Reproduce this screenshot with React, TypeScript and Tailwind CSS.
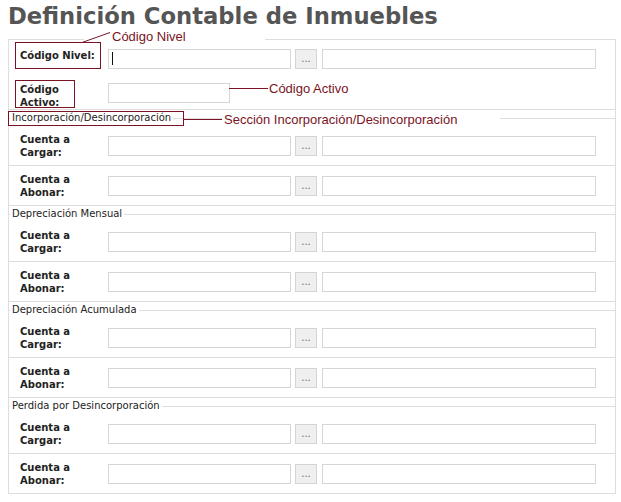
import React from 'react';

const MAROON = '#7a1424';

function Lookup({ caret = false }: { caret?: boolean }) {
  return (
    <div className="flex items-center">
      <div className="relative">
        <input type="text" className="block h-[20px] w-[183px] border border-[#d6d6d6] bg-white outline-none" />
        {caret && <span className="absolute left-[4px] top-[3px] h-[13px] w-[1px] bg-[#111]" />}
      </div>
      <button className="ml-[4px] h-[20px] w-[22px] border border-[#d4d4d4] bg-[#efefef] text-[10px] leading-none text-[#666]">...</button>
      <input type="text" className="ml-[5px] block h-[20px] w-[274px] border border-[#d6d6d6] bg-white outline-none" />
    </div>
  );
}

function AccountRow({ label }: { label: string }) {
  return (
    <div className="flex h-[40px] items-center border-b border-[#dedede]">
      <div className="w-[99px] pl-[11px] text-[10px] font-bold leading-[13px] text-[#222]">
        Cuenta a<br />
        {label}
      </div>
      <Lookup />
    </div>
  );
}

function Section({ title }: { title: string }) {
  return (
    <fieldset className="m-0 min-w-0 border-t border-[#dedede] p-0">
      <legend className="ml-[1px] px-[2px] text-[10px] leading-[16px] text-[#222]">{title}</legend>
      <AccountRow label="Cargar:" />
      <AccountRow label="Abonar:" />
    </fieldset>
  );
}

export default function App() {
  return (
    <div className="relative h-[502px] w-[621px] overflow-hidden bg-white font-['DejaVu_Sans','Verdana',sans-serif]">
      <h1 className="pl-[8px] pt-[3px] text-[22.7px] font-bold leading-[26px] text-[#555]">
        Definición Contable de Inmuebles
      </h1>

      <div className="ml-[8px] mt-[10px] w-[608px] border-x border-t border-[#dedede]">
        <div className="border-b border-[#dedede] pt-[9px]">
          <div className="flex h-[34px] items-start">
            <div className="w-[99px] pl-[11px] text-[10px] font-bold leading-[13px] text-[#222]">Código Nivel:</div>
            <Lookup caret />
          </div>
          <div className="flex h-[26px] items-start">
            <div className="w-[99px] pl-[11px] text-[10px] font-bold leading-[13px] text-[#222]">
              Código<br />
              Activo:
            </div>
            <input type="text" className="block h-[20px] w-[122px] border border-[#d6d6d6] bg-white outline-none" />
          </div>
        </div>

        <Section title="Incorporación/Desincorporación" />
        <Section title="Depreciación Mensual" />
        <Section title="Depreciación Acumulada" />
        <Section title="Perdida por Desincorporación" />
      </div>

      {/* annotations drawn over the form */}
      <div className="absolute left-[84px] top-[30px] h-[11px] w-[181px] bg-white" />
      <div className="absolute left-[222px] top-[112px] h-[14px] w-[278px] bg-white" />

      <div className="absolute left-[15px] top-[42px] h-[27px] w-[86px] border border-[#7a1424]" />
      <div className="absolute left-[15px] top-[80px] h-[28px] w-[60px] border border-[#7a1424]" />
      <div className="absolute left-[8px] top-[111px] h-[15px] w-[176px] border border-[#7a1424]" />

      <svg className="pointer-events-none absolute left-0 top-0" width="621" height="502">
        <line x1="82" y1="42.5" x2="110" y2="32.5" stroke={MAROON} strokeWidth="1" />
        <line x1="229" y1="88.5" x2="268" y2="88.5" stroke={MAROON} strokeWidth="1" />
        <line x1="184" y1="119.5" x2="222" y2="119.5" stroke={MAROON} strokeWidth="1" />
      </svg>

      <div className="absolute left-[112px] top-[29px] font-['Liberation_Sans',Arial,sans-serif] text-[13px] leading-[15px] text-[#7a1424]">
        Código Nivel
      </div>
      <div className="absolute left-[269px] top-[81px] font-['Liberation_Sans',Arial,sans-serif] text-[13px] leading-[15px] text-[#7a1424]">
        Código Activo
      </div>
      <div className="absolute left-[224px] top-[112px] font-['Liberation_Sans',Arial,sans-serif] text-[13px] leading-[15px] text-[#7a1424]">
        Sección Incorporación/Desincorporación
      </div>
    </div>
  );
}
